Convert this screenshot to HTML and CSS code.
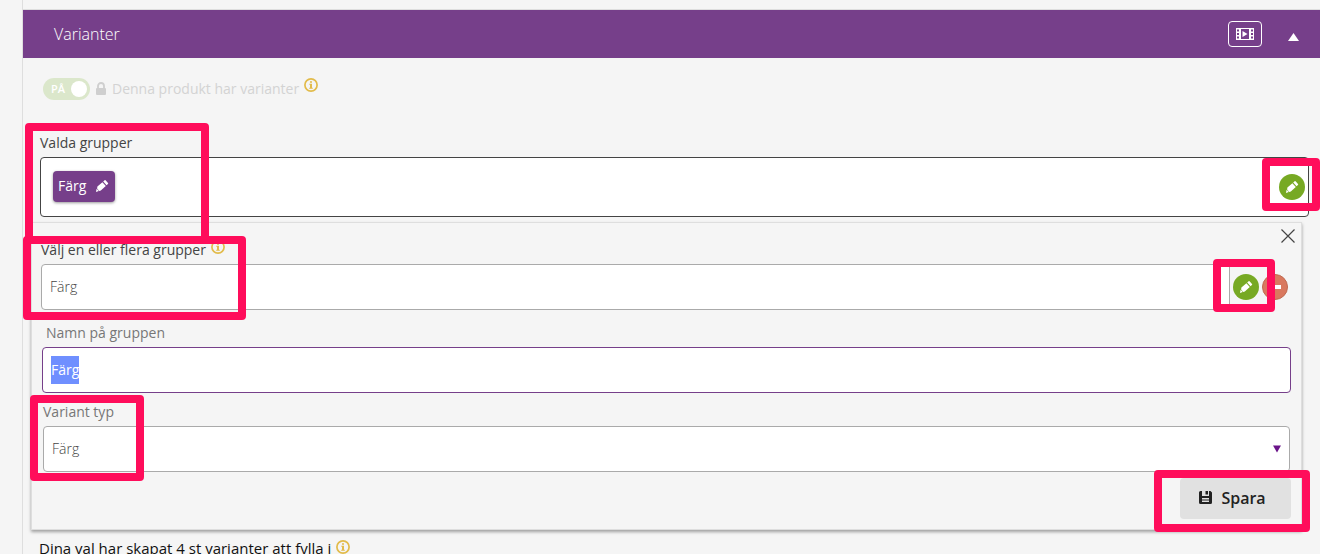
FILE: index.html
```html
<!DOCTYPE html>
<html lang="sv">
  <head>
    <meta charset="utf-8">
    <title>Varianter</title>
    <link rel="stylesheet" href="styles.css">
  </head>
  <body>
    <svg class="defs" width="0" height="0" aria-hidden="true">
      <symbol id="pencil" viewBox="0 0 14 14">
        <path d="M2.400 7.400L7.400 3.200l3.400 3.800-5 4.600-1.500.4-2.200-2.400z M8.200 2.500l1.400-1.200q.6-.4 1.200.1l2.200 2.500q.5.600-.1 1.200l-1.300 1.200z M1.600 9.700l2.200 2.400-2.800.9z" fill="currentColor"/>
      </symbol>
      <symbol id="info" viewBox="0 0 14 14">
        <circle cx="7" cy="7" r="6.1" fill="none" stroke="currentColor" stroke-width="1.7"/>
        <path d="M6 3.2h2v1.6H6z M5.3 5.8H8v4h.8v1H5.2v-1H6V6.8h-.7z" fill="currentColor"/>
      </symbol>
    </svg>

    <div class="section">
      <div class="section-header">
        <h2>Varianter</h2>
        <button class="video-btn" aria-label="Video">
          <svg width="18" height="12" viewBox="0 0 18 12">
            <path d="M0 0h18v12H0z" fill="#fff"/>
            <path d="M1 1.500h2v2H1z M1 5h2v2H1z M1 8.500h2v2H1z M15 1.500h2v2h-2z M15 5h2v2h-2z M15 8.500h2v2h-2z M5 1h8v10H5z" fill="#763f8a"/>
            <path d="M6.500 3l5 3-5 3z" fill="#fff"/>
          </svg>
        </button>
        <button class="collapse-btn" aria-label="Minimera">
          <svg width="11" height="8" viewBox="0 0 11 8"><path d="M5.500 0L11 8H0z" fill="#fff"/></svg>
        </button>
      </div>

      <div class="section-body">
        <div class="toggle-row">
          <label class="toggle">
            <input type="checkbox" checked disabled aria-label="Denna produkt har varianter">
            <span>PÅ</span>
          </label>
          <svg class="lock" width="10" height="13" viewBox="0 0 10 13">
            <path d="M2 6V4a3 3 0 0 1 6 0v2" fill="none" stroke="#cfcfcf" stroke-width="1.800"/>
            <rect y="6" width="10" height="7" rx="1" fill="#cfcfcf"/>
          </svg>
          <span class="toggle-text">Denna produkt har varianter</span>
          <svg class="info"><use href="#info"/></svg>
        </div>

        <div class="chosen">
          <div class="label">Valda grupper</div>
          <div class="group-box">
            <button class="tag">Färg <svg width="14" height="14"><use href="#pencil"/></svg></button>
            <button class="round edit" aria-label="Redigera grupper"><svg width="14" height="14"><use href="#pencil"/></svg></button>
          </div>
          <div class="mark mark-chosen"></div>
          <div class="mark mark-edit"></div>
        </div>

        <div class="panel">
          <button class="close" aria-label="Stäng">
            <svg width="14" height="14" viewBox="0 0 14 14"><path d="M.5.5l13 13M13.500.5l-13 13" stroke="#444" stroke-width="1.200"/></svg>
          </button>

          <div class="field pick">
            <div class="label">
              <label for="group">Välj en eller flera grupper</label>
              <svg class="info"><use href="#info"/></svg>
            </div>
            <div class="pick-row">
              <input id="group" class="control" type="text" value="Färg">
              <button class="round edit" aria-label="Redigera"><svg width="14" height="14"><use href="#pencil"/></svg></button>
              <button class="round remove" aria-label="Ta bort"><svg width="12" height="4"><rect width="12" height="4" fill="#fff"/></svg></button>
            </div>
            <div class="mark mark-pick"></div>
            <div class="mark mark-pick-edit"></div>
          </div>

          <div class="field name">
            <label class="label muted" for="groupName">Namn på gruppen</label>
            <input id="groupName" class="control" type="text" value="Färg">
          </div>

          <div class="field type">
            <label class="label muted" for="variantType">Variant typ</label>
            <div class="select">
              <select id="variantType" class="control"><option>Färg</option></select>
              <svg width="8" height="8" viewBox="0 0 8 8"><path d="M0 0.500h8L4 7.500z" fill="#6a1489"/></svg>
            </div>
            <div class="mark mark-type"></div>
          </div>

          <div class="actions">
            <button class="save">
              <svg width="13" height="13" viewBox="0 0 13 13">
                <path d="M1.500 0H3v5h7V0h1.500L13 1.500v10q0 1.500-1.500 1.500h-10Q0 13 0 11.500v-10Q0 0 1.500 0z M6.500 0H9v3.500H6.500z" fill="#222"/>
                <path d="M3 7h7v1.400H3z M3 9.500h7v1.400H3z" fill="#e1e1e1"/>
              </svg>
              Spara
            </button>
          </div>
          <div class="mark mark-save"></div>
        </div>

        <p class="result">Dina val har skapat 4 st varianter att fylla i <svg class="info"><use href="#info"/></svg></p>
      </div>
    </div>
    <script src="script.js"></script>
  </body>
</html>
```
FILE: styles.css
```css
* {
  box-sizing: border-box;
}
body {
  margin: 0;
  height: 100vh;
  overflow: hidden;
  background: #f5f5f5;
  color: #444;
  font: 14px/20px "Open Sans", sans-serif;
}
button,
input,
select {
  font: inherit;
  color: inherit;
}
button {
  display: flex;
  align-items: center;
  justify-content: center;
  padding: 0;
  border: none;
  background: none;
}
svg {
  flex: none;
}
.defs {
  position: absolute;
}
.section {
  margin-left: 22px;
  padding-top: 9px;
  border-left: 1px solid #dedede;
  min-height: 100vh;
}

/* header */
.section-header {
  display: flex;
  align-items: center;
  height: 49px;
  padding: 0 21px 0 31px;
  border-top: 1px solid #dedede;
  background: #763f8a;
  color: #fff;
}
.section-header h2 {
  flex: 1;
  margin: 0;
  font-size: 16px;
  font-weight: 300;
}
.video-btn {
  width: 34px;
  height: 26px;
  border: 1px solid #fff;
  border-radius: 4px;
}
.collapse-btn {
  margin-left: 26px;
  padding-top: 6px;
}

.section-body {
  padding: 20px 0 0 8px;
}
.info {
  width: 14px;
  height: 14px;
  color: #e2bb4a;
}

/* toggle */
.toggle-row {
  display: flex;
  align-items: center;
  height: 22px;
  padding-left: 12px;
  color: #d3d3d3;
}
.toggle {
  display: flex;
  align-items: center;
  width: 47px;
  height: 22px;
  padding: 0 3px 0 8px;
  border-radius: 11px;
  background: #dbe7cb;
  color: #fff;
  font-size: 11px;
  font-weight: 600;
}
.toggle input {
  order: 1;
  appearance: none;
  width: 16px;
  height: 16px;
  margin: 0 0 0 auto;
  border-radius: 50%;
  background: #fff;
}
.lock {
  margin: 0 6px 2px 6px;
}
.toggle-text {
  margin-right: 5px;
}
.toggle-row .info {
  margin-bottom: 8px;
}

.label {
  display: flex;
  height: 20px;
  margin-bottom: 4px;
}
.muted {
  color: #777;
}

/* chosen groups */
.chosen {
  position: relative;
  margin-top: 33px;
  padding: 0 11px 0 9px;
}
.group-box {
  display: flex;
  align-items: center;
  justify-content: space-between;
  height: 60px;
  padding: 0 3px 0 12px;
  border: 1px solid #444;
  border-radius: 4px;
  background: #fff;
}
.tag {
  gap: 9px;
  height: 31px;
  margin-bottom: 2px;
  padding: 0 6px 0 5px;
  border-radius: 4px;
  background: #763f8a;
  box-shadow: 0 1px 3px rgba(0, 0, 0, 0.4);
  color: #fff;
}
.round {
  flex: none;
  width: 26px;
  height: 26px;
  border-radius: 50%;
  color: #fff;
}
.edit {
  background: #77a923;
}
.remove {
  border: 1px solid #c0694f;
  background: #d9785e;
}

/* edit panel */
.panel {
  position: relative;
  margin: 5px 18px 0 0;
  padding: 17px 10px 10px 9px;
  border: 1px solid #dedede;
  box-shadow: 0 2px 3px rgba(0, 0, 0, 0.35);
}
.close {
  position: absolute;
  top: 6px;
  right: 6px;
}
.control {
  display: block;
  width: 100%;
  height: 46px;
  padding: 0 8px;
  border: 1px solid #aaa;
  border-radius: 4px;
  background: #fff;
  font-weight: 300;
  outline: none;
}
input.control {
  padding-bottom: 2px;
}
.pick {
  position: relative;
}
.pick .info {
  margin-left: 5px;
}
.pick-row {
  display: flex;
  align-items: center;
  gap: 3px;
  margin-right: 3px;
}
.pick-row .control {
  flex: 1;
  border-radius: 4px 0 0 4px;
}
.name {
  margin-top: 13px;
  padding-left: 1px;
}
.name .label {
  padding-left: 4px;
}
/* taller highlight behind the selected name */
.name .control {
  border-color: #763f8a;
  background: #fff linear-gradient(#6f8fff, #6f8fff) 8px center / 28px 28px no-repeat;
  font-weight: 400;
}
.name .control::selection {
  background: #6f8fff;
  color: #fff;
}
.type {
  position: relative;
  margin-top: 9px;
  padding: 0 1px 0 2px;
}
.select {
  position: relative;
}
.select select {
  appearance: none;
}
.select svg {
  position: absolute;
  top: 19px;
  right: 9px;
  pointer-events: none;
}
.actions {
  display: flex;
  justify-content: flex-end;
  margin-top: 6px;
}
.save {
  gap: 9px;
  width: 111px;
  height: 41px;
  padding: 0 6px 2px 0;
  border-radius: 4px;
  background: #e1e1e1;
  color: #222;
  font-size: 16px;
  font-weight: 600;
}
.result {
  margin: 8px 0 0;
  padding-left: 8px;
  color: #111;
  font-size: 15px;
}
.result .info {
  margin-left: 1px;
}

/* highlight frames */
.mark {
  position: absolute;
  z-index: 1;
  border: 8px solid #ff0d5b;
  border-radius: 4px;
  pointer-events: none;
}
.mark-chosen {
  top: -10px;
  left: -6px;
  width: 184px;
  height: 121px;
}
.mark-edit {
  top: 25px;
  right: 0;
  width: 58px;
  height: 53px;
}
.mark-pick {
  top: -4px;
  left: -18px;
  width: 223px;
  height: 84px;
}
.mark-pick-edit {
  top: 19px;
  right: 16px;
  width: 62px;
  height: 53px;
}
.mark-type {
  top: -7px;
  left: -11px;
  width: 114px;
  height: 86px;
}
.mark-save {
  right: -9px;
  bottom: -3px;
  width: 156px;
  height: 62px;
}
```
FILE: script.js
```js
const groupName = document.getElementById("groupName");
groupName.focus();
groupName.select();
```
